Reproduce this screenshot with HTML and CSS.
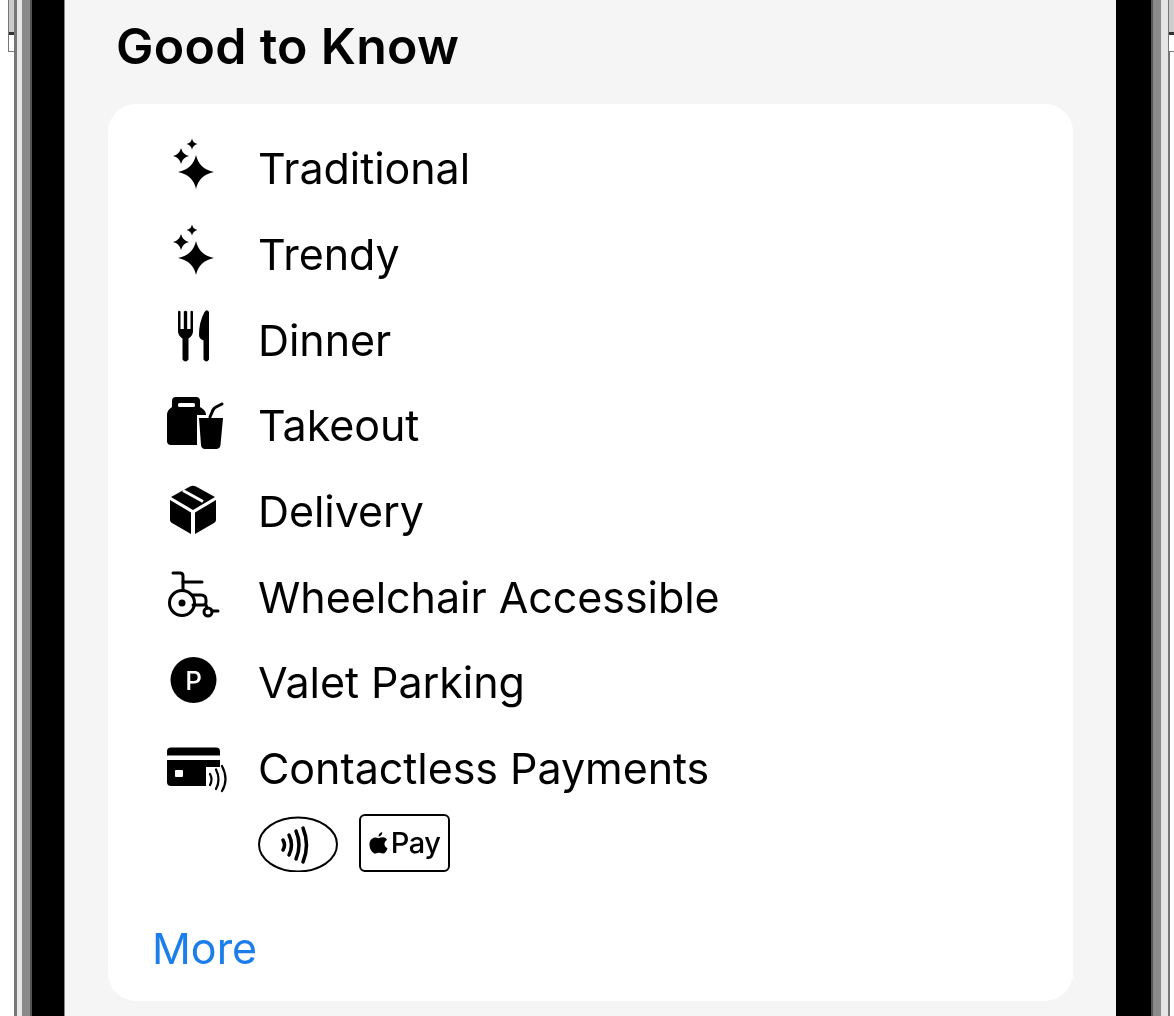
FILE: index.html
```html
<!DOCTYPE html>
<html lang="en">
<head>
  <meta charset="UTF-8">
  <title>Good to Know</title>
  <link rel="stylesheet" href="styles.css">
</head>
<body>
  <div class="phone">
    <div class="side-btn side-btn-left"></div>
    <div class="edge edge-left"></div>

    <main class="screen">
      <h2 class="title">Good to Know</h2>

      <section class="card">
        <div class="row">
          <svg class="icon" viewBox="0 0 68 68">
            <path d="M36 19Q39 33 54 36Q39 39 36 53Q33 39 18 36Q33 33 36 19Z"/>
            <path d="M21 12Q22.500 18.500 29 20Q22.500 21.500 21 28Q19.500 21.500 13 20Q19.500 18.500 21 12Z"/>
            <path d="M32 2.500Q33 7 37.500 8Q33 9 32 13.500Q31 9 26.500 8Q31 7 32 2.500Z"/>
          </svg>
          <span>Traditional</span>
        </div>
        <div class="row">
          <svg class="icon" viewBox="0 0 68 68">
            <path d="M36 19Q39 33 54 36Q39 39 36 53Q33 39 18 36Q33 33 36 19Z"/>
            <path d="M21 12Q22.500 18.500 29 20Q22.500 21.500 21 28Q19.500 21.500 13 20Q19.500 18.500 21 12Z"/>
            <path d="M32 2.500Q33 7 37.500 8Q33 9 32 13.500Q31 9 26.500 8Q31 7 32 2.500Z"/>
          </svg>
          <span>Trendy</span>
        </div>
        <div class="row">
          <svg class="icon" viewBox="0 0 68 68">
            <path d="M18 4.500Q19.300 3 20.500 4.500V22H23.800V4.500Q25.500 3 27.200 4.500V22H30.500V4.500Q31.700 3 33 4.500V24Q33 29 28.500 31.500V52.500Q25.500 56.500 22.500 52.500V31.500Q18 29 18 24Z"/>
            <path d="M49 5Q47 1.500 44.500 5Q39 15 39 28Q39 31.500 43.500 33.500V52.500Q46.500 56.500 49 52.500Z"/>
          </svg>
          <span>Dinner</span>
        </div>
        <div class="row">
          <svg class="icon" viewBox="0 0 68 68">
            <path d="M16 4H36Q40 4 40 8V14Q46 17 46 22H37V52H11Q7 52 7 48V22Q7 17 12 14V8Q12 4 16 4Z"/>
            <rect class="cut" x="18" y="10" width="17" height="4" rx="1.500"/>
            <path d="M39 25H63L60.500 52Q60 56 56 56H45Q41.500 56 41 52Z"/>
            <path class="line" d="M50 24L53 17Q54 15 56 14L62 11"/>
          </svg>
          <span>Takeout</span>
        </div>
        <div class="row">
          <svg class="icon" viewBox="0 0 68 68">
            <path d="M30 7.500Q33 6 36 7.500L55 18L33 31L11 18Z"/>
            <path class="cut-line" d="M23 11.500L43 22.500"/>
            <path d="M10 21L31 33.500V55L12 44Q10 43 10 41Z"/>
            <path d="M56 21L35 33.500V55L54 44Q56 43 56 41Z"/>
          </svg>
          <span>Delivery</span>
        </div>
        <div class="row">
          <svg class="icon" viewBox="0 0 68 68">
            <circle class="line" cx="22" cy="39" r="12.500"/>
            <circle cx="22" cy="39" r="3.500"/>
            <path class="line" d="M13 9H20Q23 9 23 12V26"/>
            <path class="line" d="M23 18H42"/>
            <path class="line" d="M32 31H41Q46 31 46 36V38Q46 41 43 41H33"/>
            <path class="line" d="M46 41L47 44"/>
            <circle class="line" cx="48" cy="48" r="4"/>
            <path class="line" d="M52 47H58"/>
          </svg>
          <span>Wheelchair Accessible</span>
        </div>
        <div class="row">
          <svg class="icon" viewBox="0 0 68 68">
            <circle cx="33.500" cy="30" r="23"/>
            <text class="park" x="33.500" y="39.500">P</text>
          </svg>
          <span>Valet Parking</span>
        </div>
        <div class="row">
          <svg class="icon" viewBox="0 0 68 68">
            <path d="M7 19.500V15.500Q7 11.500 11 11.500H56Q60 11.500 60 15.500V19.500Z"/>
            <path d="M7 24H60V46Q60 50 56 50H11Q7 50 7 46Z"/>
            <rect class="cut" x="15" y="34" width="8" height="7" rx="1"/>
            <rect class="cut" x="46" y="31" width="22" height="26"/>
            <path class="thin" d="M50 38Q53 43.500 50 49M56 33.500Q61 43.500 56 53M62 30Q69 43.500 62 55"/>
          </svg>
          <span>Contactless Payments</span>
        </div>

        <div class="badges">
          <svg class="badge-nfc" viewBox="0 0 80 58">
            <ellipse cx="40" cy="30.500" rx="39" ry="27"/>
            <path d="M25 26Q28 31 25 36M31 21Q36 31 31 41M38 17Q44 31 38 45M45 14Q52 31 45 48"/>
          </svg>
          <div class="badge-pay">
            <svg class="apple" viewBox="0 0 20 24">
              <path d="M14 1Q14 5 10 6Q10 2 14 1ZM10 7.500Q12 6.500 15 6.500Q18 7 19 9Q15.500 11.500 16.500 15Q17 17 19.500 18Q17.500 23.500 15 23.500Q13 23.500 11.500 22.800Q10 22.500 8.500 23Q6.500 24 5.500 23.500Q1 21 .5 15Q0 9 5 7Q7.500 6.500 10 7.500Z"/>
            </svg>
            <span>Pay</span>
          </div>
        </div>

        <a class="more">More</a>
      </section>
    </main>

    <div class="edge edge-right"></div>
    <div class="side-btn side-btn-right"></div>
  </div>
</body>
</html>
```

FILE: styles.css
```css
html, body {
  margin: 0;
  height: 100%;
  overflow: hidden;
  background-color: #fff;
}

body {
  font-family: Inter, "Liberation Sans", sans-serif;
  color: #000;
}

.phone {
  display: flex;
  position: relative;
  height: 1016px;
}

.edge {
  flex: none;
  height: 100%;
}

.edge-left {
  width: 65px;
  background: linear-gradient(to right,
    #fff 0 14px, #777 14px 17px, #e6e6e6 17px 22px, #8a8a8a 22px 30px, #555 30px 32px, #000 32px 64px, #888 64px 65px);
}

.edge-right {
  width: 58px;
  background: linear-gradient(to right,
    #000 0 35px, #555 35px 37px, #8a8a8a 37px 45px, #e6e6e6 45px 52px, #777 52px 54px, #fff 54px 58px);
}

.side-btn {
  position: absolute;
  top: -2px;
  width: 7px;
  height: 54px;
  box-sizing: border-box;
  border: 1px solid #777;
  background: linear-gradient(to bottom, #ccc 0 33px, #333 33px 36px, #fff 36px 100%);
}

.side-btn-left {
  left: 8px;
}

.side-btn-right {
  left: 1168px;
}

.screen {
  flex: 1;
  box-sizing: border-box;
  padding: 0 43px;
  background-color: #f5f5f5;
}

.title {
  margin: 0 0 0 8px;
  padding-top: 18px;
  height: 104px;
  box-sizing: border-box;
  font-size: 50px;
  line-height: 56px;
  font-weight: 600;
  letter-spacing: 0.3px;
  filter: blur(0.4px);
}

.card {
  height: 897px;
  box-sizing: border-box;
  padding: 23px 0 0 52px;
  background-color: #fff;
  border-radius: 28px;
}

.row {
  display: flex;
  align-items: center;
  gap: 30px;
  height: 85.7px;
  font-size: 43px;
  letter-spacing: -0.05px;
  filter: blur(0.4px);
}

.row span {
  padding-bottom: 3px;
}

.icon {
  flex: none;
  width: 68px;
  height: 68px;
}

.cut {
  fill: #fff;
}

.cut-line {
  fill: none;
  stroke: #fff;
  stroke-width: 3;
}

.line {
  fill: none;
  stroke: #000;
  stroke-width: 3;
  stroke-linecap: round;
}

.thin {
  fill: none;
  stroke: #000;
  stroke-width: 2.200;
  stroke-linecap: round;
}

.park {
  fill: #fff;
  font-size: 26px;
  font-weight: 500;
  text-anchor: middle;
}

.badges {
  display: flex;
  align-items: center;
  gap: 21px;
  margin: 1px 0 0 98px;
  height: 58px;
  filter: blur(0.4px);
}

.badge-nfc {
  width: 80px;
  height: 58px;
  fill: none;
  stroke: #000;
  stroke-width: 2;
}

.badge-nfc path {
  stroke-width: 3.500;
  stroke-linecap: round;
}

.badge-pay {
  display: flex;
  align-items: center;
  justify-content: center;
  gap: 3px;
  width: 91px;
  height: 58px;
  box-sizing: border-box;
  border: 2px solid #000;
  border-radius: 6px;
  font-size: 29px;
  font-weight: 500;
  letter-spacing: -0.5px;
}

.apple {
  width: 19px;
  height: 23px;
}

.more {
  display: block;
  margin: 51px 0 0 -8px;
  font-size: 43px;
  line-height: 50px;
  color: #1c7eea;
  filter: blur(0.4px);
}
```
